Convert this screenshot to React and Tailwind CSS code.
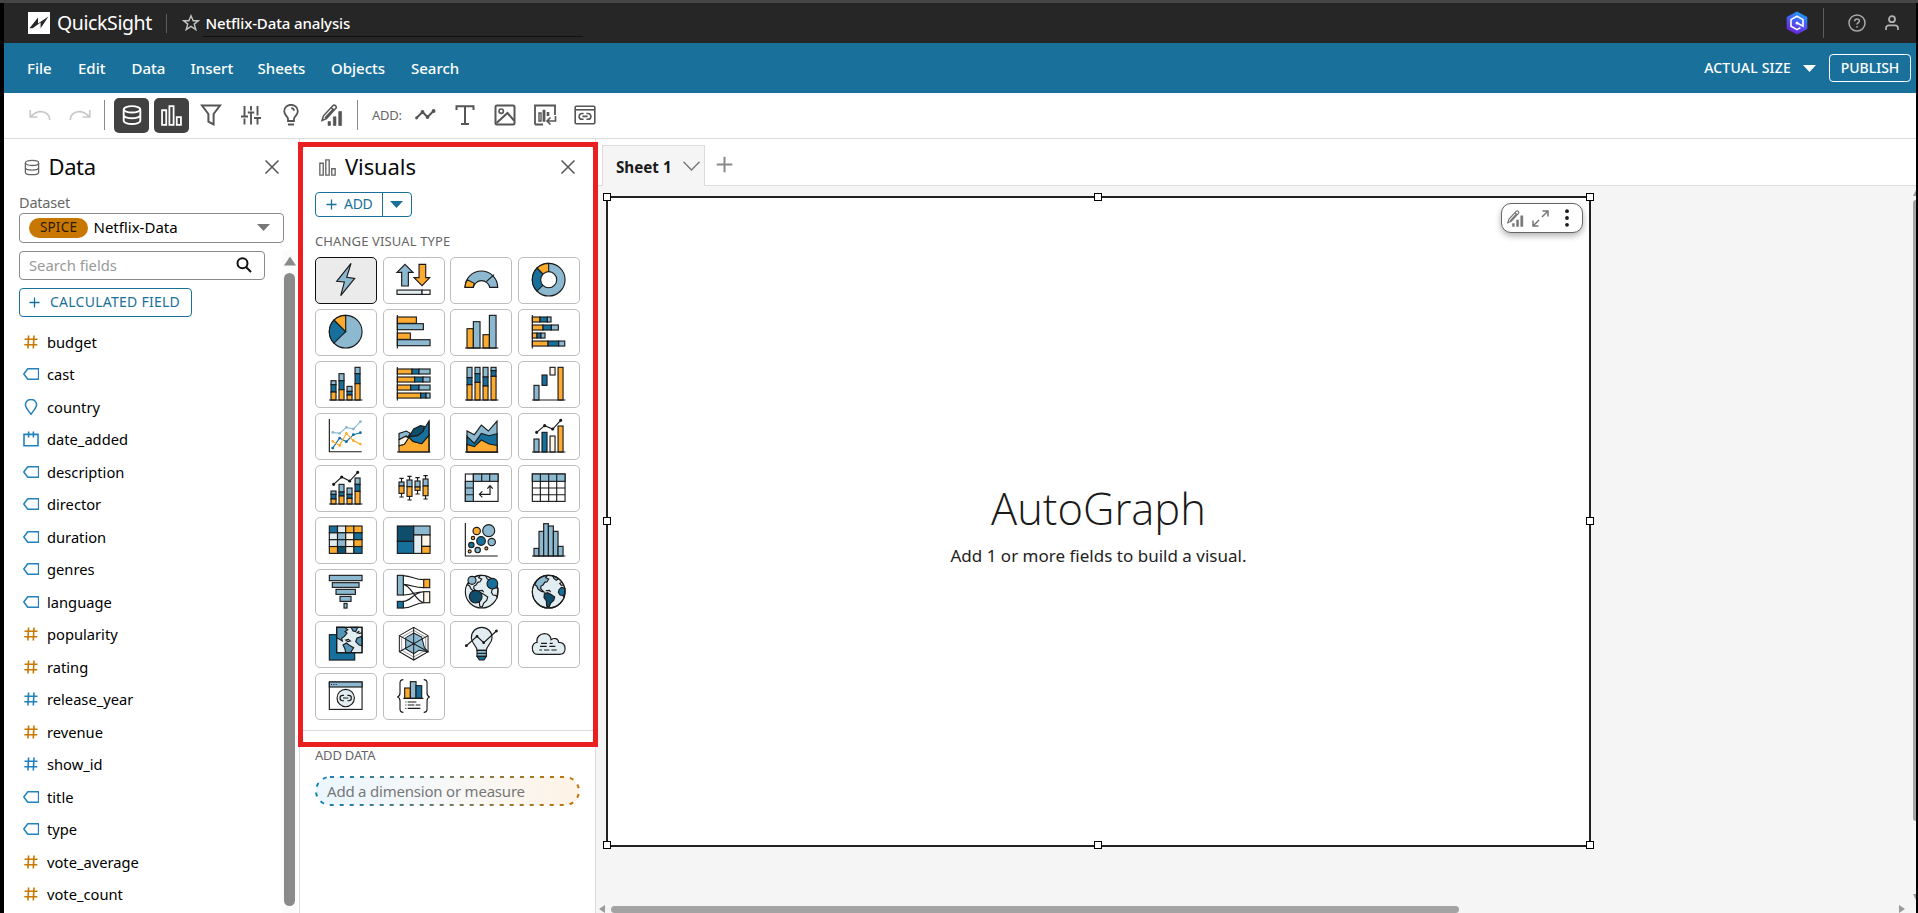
import React from "react";

const L = "#8cb8d0";
const B = "#17709c";
const D = "#0f4d6c";
const O = "#fdab2f";
const P = "#e2edf2";
const C = "#fdf6e6";

const Base = () => <path d="M0 99H100" />;
const R = ({ x, y, w, h, f }) => <rect x={x} y={y} width={w} height={h} fill={f} />;

const VStack = ({ x, stops, w = 15 }) => {
  const fills = [L, B, O];
  return stops.slice(0, 3).map((s, i) => (
    <rect key={i} x={x} y={s} width={w} height={stops[i + 1] - s} fill={fills[i]} />
  ));
};
const HStack = ({ y, stops }) => {
  const fills = [O, B, L];
  return stops.slice(0, 3).map((s, i) => (
    <rect key={i} x={s} y={y} width={stops[i + 1] - s} height={15} fill={fills[i]} />
  ));
};
const Series = ({ pts, color = "#1a1a1a", r = 3 }) => (
  <g stroke={color} fill={color}>
    <polyline points={pts.map((p) => p.join(",")).join(" ")} fill="none" />
    {pts.map(([x, y], i) => (
      <circle key={i} cx={x} cy={y} r={r} />
    ))}
  </g>
);
const Box = ({ x, top, bottom, split, lo, hi }) => (
  <g>
    <path d={`M${x + 7.5} ${lo}V${hi}M${x + 1} ${lo}H${x + 14}M${x + 1} ${hi}H${x + 14}`} />
    <R x={x} y={top} w={15} h={split - top} f={L} />
    <R x={x} y={split} w={15} h={bottom - split} f={O} />
  </g>
);

const heat = [
  [B, P, O, O],
  [P, L, C, B],
  [P, L, C, O],
  [O, D, C, B],
];

const NORTH = "M14 17C24 6 34 1 46 1L41 8L50 12L45 20L38 22L33 30L27 33L26 40L31 46L36 51L28 49L18 42L14 33L8 30Z";
const SOUTH = "M37 56L46 53L56 58L68 66L65 76L56 84L51 97L44 93L43 78L36 68Z";
const AFRICA = "M99 40L88 37L81 44L79 52L84 60L92 61L96 66Z";
const EUROPE = "M62 3L66 11L73 16L78 12M90 22L83 25L88 31L94 30";

const visuals = {
  AutoGraph: <path d="M66 1L23 55L46 57L35 98L77 46L53 43Z" fill={L} />,
  KPI: (
    <g>
      <path d="M24 4L48 28H34V69H14V28H0Z" fill={L} />
      <path d="M66 4H86V44H98L75 68L51 44H66Z" fill={O} />
      <R x={0} y={81} w={75} h={13} f={P} />
      <R x={75} y={81} w={24} h={13} f="#fff" />
    </g>
  ),
  Gauge: (
    <g>
      <path d="M0 73A49 49 0 0 1 98 73H74A25 25 0 0 0 25 73Z" fill={L} />
      <path d="M0 73A49 49 0 0 1 7 50L28 61A25 25 0 0 0 25 73Z" fill={O} />
      <path d="M64 56L87 35" />
    </g>
  ),
  Donut: (
    <g>
      <circle cx="50" cy="50" r="49" fill={L} />
      <path d="M50 50L15 84A49 49 0 0 1 15 15Z" fill={B} />
      <path d="M50 50L15 15A49 49 0 0 1 50 1Z" fill={O} />
      <circle cx="50" cy="50" r="24" fill="#fff" />
    </g>
  ),
  Pie: (
    <g>
      <circle cx="50" cy="50" r="49" fill={L} />
      <path d="M50 50L15 84A49 49 0 0 1 15 15Z" fill={B} />
      <path d="M50 50L15 15A49 49 0 0 1 50 1Z" fill={O} />
    </g>
  ),
  "Horizontal bar": (
    <g>
      <R x={1} y={6} w={57} h={19} f={O} />
      <R x={1} y={26} w={78} h={18} f={L} />
      <R x={1} y={54} w={39} h={19} f={O} />
      <R x={1} y={74} w={98} h={18} f={L} />
      <path d="M1 0V100" />
    </g>
  ),
  "Vertical bar": (
    <g>
      <R x={6} y={41} w={19} h={58} f={O} />
      <R x={25} y={20} w={20} h={79} f={L} />
      <R x={54} y={59} w={19} h={40} f={O} />
      <R x={73} y={1} w={20} h={98} f={L} />
      <Base />
    </g>
  ),
  "Stacked horizontal": (
    <g>
      <HStack y={6} stops={[1, 24, 46, 57]} />
      <HStack y={30} stops={[1, 33, 58, 79]} />
      <HStack y={54} stops={[1, 15, 27, 39]} />
      <HStack y={78} stops={[1, 48, 80, 98]} />
      <path d="M1 0V100" />
    </g>
  ),
  "Stacked vertical": (
    <g>
      <VStack x={6} stops={[41, 53, 75, 99]} />
      <VStack x={30} stops={[20, 41, 68, 99]} />
      <VStack x={54} stops={[58, 73, 84, 99]} />
      <VStack x={78} stops={[1, 20, 50, 99]} />
      <Base />
    </g>
  ),
  "Full horizontal": (
    <g>
      <HStack y={6} stops={[1, 45, 66, 99]} />
      <HStack y={30} stops={[1, 53, 78, 99]} />
      <HStack y={54} stops={[1, 41, 66, 99]} />
      <HStack y={78} stops={[1, 71, 87, 99]} />
      <path d="M1 0V100" />
    </g>
  ),
  "Full vertical": (
    <g>
      <VStack x={6} stops={[1, 32, 53, 99]} />
      <VStack x={30} stops={[1, 20, 46, 99]} />
      <VStack x={54} stops={[1, 30, 57, 99]} />
      <VStack x={78} stops={[1, 11, 28, 99]} />
      <Base />
    </g>
  ),
  Waterfall: (
    <g>
      <R x={6} y={55} w={15} h={44} f={L} />
      <R x={30} y={24} w={15} h={31} f={B} />
      <R x={54} y={1} w={15} h={23} f={C} />
      <R x={78} y={1} w={15} h={98} f={O} />
      <Base />
    </g>
  ),
  Line: (
    <g>
      <Series color={L} r={2.5} pts={[[11, 40], [32, 43], [52, 25], [73, 30], [94, 8]]} />
      <Series color={B} r={2.5} pts={[[11, 87], [32, 57], [52, 68], [73, 47], [94, 41]]} />
      <Series color={O} r={2.5} pts={[[11, 67], [32, 79], [52, 43], [73, 65], [94, 75]]} />
      <path d="M1 0V98H98" />
    </g>
  ),
  Area: (
    <g>
      <path d="M6 99V80L22 76L36 53L48 67L74 74L96 48V99Z" fill={O} />
      <path d="M6 62V43L28 36L40 43L32 55L28 51Z" fill={L} />
      <path d="M6 80V62L26 52L35 56L22 76Z" fill={C} />
      <path d="M35 54L62 49L78 35L96 6V48L74 74L48 67Z" fill={B} />
      <path d="M35 54L50 30L70 20L82 22L78 37L62 50L45 50Z" fill={D} />
      <path d="M96 6V99M0 99H100" />
    </g>
  ),
  "Stacked area": (
    <g>
      <path d="M6 99V36L28 47L49 18L70 36L96 6V99Z" fill={L} />
      <path d="M6 99V52L28 73L49 43L72 50L96 44V99Z" fill={B} />
      <path d="M6 99V76L28 83L49 63L72 75L96 79V99Z" fill={O} />
      <Base />
    </g>
  ),
  "Clustered combo": (
    <g>
      <R x={6} y={60} w={15} h={39} f={L} />
      <R x={30} y={40} w={15} h={59} f={B} />
      <R x={54} y={51} w={15} h={48} f={C} />
      <R x={78} y={21} w={15} h={78} f={O} />
      <Series pts={[[14, 40], [38, 20], [62, 30], [86, 4]]} />
      <Base />
    </g>
  ),
  "Stacked combo": (
    <g>
      <VStack x={6} stops={[60, 70, 84, 99]} />
      <VStack x={30} stops={[40, 63, 75, 99]} />
      <VStack x={54} stops={[51, 70, 82, 99]} />
      <VStack x={78} stops={[21, 40, 61, 99]} />
      <Series pts={[[14, 40], [38, 18], [62, 30], [86, 4]]} />
      <Base />
    </g>
  ),
  "Box plot": (
    <g>
      <Box x={6} top={33} split={45} bottom={67} lo={22} hi={78} />
      <Box x={30} top={27} split={47} bottom={76} lo={16} hi={87} />
      <Box x={54} top={30} split={48} bottom={58} lo={20} hi={69} />
      <Box x={78} top={24} split={45} bottom={74} lo={14} hi={84} />
    </g>
  ),
  Pivot: (
    <g>
      <R x={1} y={9} w={98} h={82} f="#fff" />
      <R x={25} y={9} w={74} h={22} f={L} />
      <R x={1} y={31} w={24} h={60} f={L} />
      <path d="M25 9V31M50 9V31M74 9V31M1 51H25M1 71H25" />
      <path d="M75 46V70H44M67 53L75 44L83 53M52 61L43 70L52 79" />
    </g>
  ),
  Table: (
    <g>
      <R x={1} y={9} w={98} h={82} f="#fff" />
      <R x={1} y={9} w={98} h={22} f={L} />
      <path d="M25 9V91M50 9V91M74 9V91M1 51H99M1 71H99" />
    </g>
  ),
  Heatmap: (
    <g>
      {heat.map((row, r) =>
        row.map((f, c) => <R key={`${r}-${c}`} x={1 + c * 24.5} y={9 + r * 20.5} w={24.5} h={20.5} f={f} />)
      )}
    </g>
  ),
  Treemap: (
    <g>
      <R x={1} y={9} w={49} h={46} f={D} />
      <R x={1} y={55} w={49} h={36} f={B} />
      <R x={50} y={9} w={49} h={27} f={L} />
      <R x={50} y={36} w={24} h={55} f={P} />
      <R x={74} y={36} w={25} h={34} f={C} />
      <R x={74} y={70} w={25} h={21} f={O} />
    </g>
  ),
  Scatter: (
    <g>
      <circle cx="35" cy="24" r="11" fill={O} />
      <circle cx="71" cy="23" r="18" fill={L} />
      <circle cx="24" cy="45" r="5" fill={O} />
      <circle cx="48" cy="54" r="13" fill={B} />
      <circle cx="80" cy="57" r="11" fill={L} />
      <circle cx="19" cy="66" r="8" fill={B} />
      <circle cx="64" cy="76" r="4.5" fill={O} />
      <circle cx="38" cy="81" r="8" fill={L} />
      <circle cx="14" cy="85" r="4.5" fill={O} />
      <path d="M1 0V99H98" />
    </g>
  ),
  Histogram: (
    <g>
      <R x={6} y={76} w={15} h={23} f={L} />
      <R x={21} y={25} w={14} h={74} f={L} />
      <R x={35} y={2} w={14} h={97} f={L} />
      <R x={49} y={9} w={15} h={90} f={L} />
      <R x={64} y={25} w={14} h={74} f={L} />
      <R x={78} y={70} w={15} h={29} f={L} />
      <Base />
    </g>
  ),
  Funnel: (
    <g>
      <R x={1} y={1} w={98} h={16} f={L} />
      <R x={10} y={23} w={80} h={14} f={L} />
      <R x={21} y={43} w={58} h={15} f={L} />
      <R x={33} y={64} w={33} h={15} f={L} />
      <R x={45} y={85} w={9} h={14} f={L} />
    </g>
  ),
  Sankey: (
    <g>
      <path d="M19 2C48 4 52 14 80 14M19 28C44 30 52 38 80 38M19 28C42 30 56 80 80 83M19 60C50 60 52 50 80 50M19 79C44 78 48 52 80 50M19 99C50 98 52 84 80 83" />
      <R x={1} y={1} w={18} h={59} f={L} />
      <R x={1} y={79} w={18} h={20} f={B} />
      <R x={80} y={13} w={18} h={25} f={O} />
      <R x={80} y={50} w={18} h={33} f={C} />
    </g>
  ),
  "Points on map": (
    <g>
      <circle cx="50" cy="50" r="49" fill={P} />
      <path d={NORTH} />
      <path d={SOUTH} />
      <path d={AFRICA} />
      <path d={EUROPE} />
      <path d="M41 47L52 46L56 51" />
      <circle cx="21" cy="16" r="12" fill={L} />
      <circle cx="82" cy="26" r="16" fill={B} />
      <circle cx="32" cy="65" r="19" fill={D} />
    </g>
  ),
  "Filled map": (
    <g>
      <circle cx="50" cy="50" r="49" fill={P} />
      <path d={NORTH} fill={L} />
      <path d="M62 3L66 11L73 16L78 12L74 7Z" fill={L} />
      <path d={SOUTH} fill={D} />
      <path d={AFRICA} fill={B} />
      <path d="M90 22L83 25L88 31L94 30M41 47L52 46L56 51" />
      <circle cx="50" cy="50" r="49" />
    </g>
  ),
  "Layer map": (
    <g>
      <R x={1} y={23} w={76} h={76} f={B} />
      <R x={23} y={1} w={76} h={76} f={P} />
      <path d="M23 1H47L56 8L48 14L54 18L46 28L38 34L40 42L34 38L23 32Z" fill="#5496ba" />
      <path d="M66 1L72 12L80 14L86 1ZM99 28L84 33L80 44L90 54L99 56ZM42 54L52 48L60 54L74 62L64 77H50L48 66Z" fill="#5496ba" />
      <path d="M50 39L58 37L64 42L56 44ZM91 12L84 17L92 19L99 17" />
      <rect x="23" y="1" width="76" height="76" />
    </g>
  ),
  Radar: (
    <g strokeWidth="3">
      <path d="M50 1L93 26V74L50 99L7 74V26Z" fill="#fff" />
      <path d="M50 10L86 31V69L50 90L14 69V31Z" stroke="#6b6b6b" strokeWidth="2" />
      <path d="M50 18L74 30L82 62L93 74L66 70L50 80L26 66V32Z" fill={L} />
      <path d="M50 1V99M7 26L93 74M93 26L7 74" />
    </g>
  ),
  Insight: (
    <g>
      <path d="M36 70C36 56 19 50 19 32C19 14 33 1 50 1S81 14 81 32C81 50 64 56 64 70Z" fill={P} />
      <path d="M36 70H64V88H36Z" fill={L} />
      <path d="M36 79H64" />
      <path d="M36 88H64L57 99H43Z" fill={B} />
      <Series pts={[[4, 56], [36, 28], [56, 47], [94, 12]]} r={2.5} />
    </g>
  ),
  "Word cloud": (
    <g>
      <path d="M17 82C6 82 1 74 1 64C1 53 8 46 15 46C12 30 25 20 37 20C50 20 56 28 57 38C66 32 78 33 80 46C92 46 99 54 99 65C99 76 92 82 82 82Z" fill={P} />
      <path d="M27 49H45M53 49H62M24 58H44M52 58H70M22 69H30M36 69H52M58 69H74" strokeWidth="3.5" />
    </g>
  ),
  "Custom content": (
    <g>
      <R x={1} y={9} w={98} h={82} f="#fff" />
      <R x={1} y={9} w={98} h={15} f={L} />
      <path d="M6 16.5H9M13 16.5H16M20 16.5H23" />
      <circle cx="50" cy="57" r="26" fill={P} />
      <path d="M45 49H41A8 8 0 0 0 41 65H45M55 49H59A8 8 0 0 1 59 65H55M42 57H58" />
    </g>
  ),
  "Custom visual": (
    <g>
      <R x={23} y={27} w={17} h={31} f={O} />
      <R x={40} y={8} w={17} h={50} f={L} />
      <R x={57} y={20} w={17} h={38} f={B} />
      <path d="M19 58H79M25 69H28M32 69H58M25 78H28M32 78H52M56 78H70M25 88H28M32 88H70" />
      <path d="M19 2C11 2 9 5 9 12V42C9 50 6 53 1 54C6 55 9 58 9 66V90C9 97 11 100 19 100M80 2C88 2 90 5 90 12V42C90 50 93 53 98 54C93 55 90 58 90 66V90C90 97 88 100 80 100" />
    </g>
  ),
};

const VisualTile = ({ name, active }) => (
  <button
    aria-label={name}
    className={
      active
        ? "flex h-[47px] items-center justify-center rounded-[5px] border border-[#111] bg-[#ebebeb] pb-[2px]"
        : "flex h-[47px] items-center justify-center rounded-[5px] border border-[#bdbdbd] bg-white pb-[2px]"
    }
  >
    <svg viewBox="0 0 100 100" className="size-[33.4px] overflow-visible" fill="none" stroke="#1a1a1a" strokeWidth="3.4">
      {visuals[name]}
    </svg>
  </button>
);

const fieldIcons = {
  num: <path d="M5.6 1.5L4.9 14.5M11 1.5L10.3 14.5M1.5 5.3H14.5M1.3 10.8H14.3" strokeWidth="1.6" />,
  text: <path d="M0.8 8L4.8 2.7H15.6V13.3H4.8Z" strokeWidth="1.5" strokeLinejoin="round" />,
  geo: <path d="M8 15.4C5 11 2.4 8.6 2.4 5.8A5.6 5.4 0 0 1 13.6 5.8C13.6 8.6 11 11 8 15.4Z" strokeWidth="1.5" />,
  date: <path d="M1 3.4H15V14.8H1ZM5.6 0.4V6.4M10.4 0.4V6.4" strokeWidth="1.6" />,
};

const fields = [
  ["budget", "num", true],
  ["cast", "text"],
  ["country", "geo"],
  ["date_added", "date"],
  ["description", "text"],
  ["director", "text"],
  ["duration", "text"],
  ["genres", "text"],
  ["language", "text"],
  ["popularity", "num", true],
  ["rating", "num", true],
  ["release_year", "num"],
  ["revenue", "num", true],
  ["show_id", "num"],
  ["title", "text"],
  ["type", "text"],
  ["vote_average", "num", true],
  ["vote_count", "num", true],
];

const menu = [
  ["File", "w-[51px]"],
  ["Edit", "w-[53.5px]"],
  ["Data", "w-[59px]"],
  ["Insert", "w-[67px]"],
  ["Sheets", "w-[73.5px]"],
  ["Objects", "w-[80px]"],
  ["Search", "w-[60px]"],
];

const Close = () => (
  <svg viewBox="0 0 14 14" className="size-[14px]" fill="none" stroke="#545454" strokeWidth="1.5">
    <path d="M0.5 0.5L13.5 13.5M13.5 0.5L0.5 13.5" />
  </svg>
);
const Plus = ({ className }) => (
  <svg viewBox="0 0 12 12" className={className} fill="none" stroke="currentColor" strokeWidth="1.4">
    <path d="M6 0.5V11.5M0.5 6H11.5" />
  </svg>
);
const Caret = ({ className }) => (
  <svg viewBox="0 0 12 7" className={className} fill="currentColor" preserveAspectRatio="none">
    <path d="M0 0H12L6 7Z" />
  </svg>
);
const Database = ({ className, sw }) => (
  <svg viewBox="0 0 20 20" className={className} fill="none" stroke="currentColor" strokeWidth={sw}>
    <ellipse cx="10" cy="4.3" rx="8.3" ry="3.2" />
    <path d="M1.7 4.3V15.8C1.7 17.6 5.4 19 10 19S18.3 17.6 18.3 15.8V4.3M1.7 10C1.7 11.8 5.4 13.2 10 13.2S18.3 11.8 18.3 10" />
  </svg>
);
const Bars = ({ className, sw }) => (
  <svg viewBox="0 0 20 20" className={className} fill="none" stroke="currentColor" strokeWidth={sw}>
    <path d="M1 5H5V19H1ZM8 1H12V19H8ZM15 11.5H19V19H15Z" />
  </svg>
);
const PencilChart = ({ className }) => (
  <svg viewBox="0 0 22 22" className={className} fill="none" stroke="currentColor" strokeWidth="1.5">
    <path d="M1 16.5L2.5 11.8L11.8 1.8C12.6 1 13.8 1 14.6 1.8C15.4 2.6 15.4 3.8 14.6 4.6L5.5 14.6ZM4 14L12.6 4.8M10.2 3.6L13 6.2" />
    <path d="M7 17.5H9.5V21.5H7ZM12.3 12.8H15V21.5H12.3ZM17.7 7.5H20.6V21.5H17.7Z" fill="currentColor" strokeWidth="0.6" />
  </svg>
);

const Tool = ({ className, children }) => (
  <svg viewBox="0 0 22 22" className={className} fill="none" stroke="#555" strokeWidth="2">
    {children}
  </svg>
);

const Header = () => (
  <header className="flex h-[40px] shrink-0 items-center bg-[#262626] text-white">
    <svg viewBox="0 0 22 22" className="ml-[24px] size-[22px]">
      <rect width="22" height="22" fill="#fff" />
      <path d="M1.5 16.3L10 5.6V11.6L20.5 4.6L12.6 16.3V10.4L4.6 16.3Z" fill="#262626" />
    </svg>
    <span className="ml-[7px] w-[109px] text-[19.5px] leading-none tracking-[-0.4px]">QuickSight</span>
    <span className="h-[19px] w-px bg-[#5d5d5d]" />
    <svg viewBox="0 0 24 24" className="ml-[15px] size-[18px]" fill="none" stroke="#c4c4c4" strokeWidth="1.9">
      <path d="M12 2.4L14.9 9H21.8L16.3 13.5L18.4 20.8L12 16.6L5.6 20.8L7.7 13.5L2.2 9H9.1Z" />
    </svg>
    <div className="mb-[6px] ml-[3px] flex h-[26px] w-[380px] items-center self-end border-b border-[#111]">
      <span className="ml-[2.5px] text-[15px] font-medium leading-none tracking-[-0.13px]">Netflix-Data analysis</span>
    </div>
    <svg viewBox="0 0 22 24" className="ml-auto h-[24px] w-[22px]">
      <defs>
        <linearGradient id="hexfill" x1="0.7" y1="0" x2="0.3" y2="1">
          <stop offset="0" stopColor="#14a2ff" />
          <stop offset="0.45" stopColor="#4a5cf5" />
          <stop offset="1" stopColor="#6b1fd0" />
        </linearGradient>
      </defs>
      <path d="M11 0.5L21.3 6V18L11 23.5L0.7 18V6Z" fill="url(#hexfill)" />
      <path d="M14.4 16.6L11 18.6L5 15.2V8.6L11 5.2L17 8.6V15.2L11.2 12" fill="none" stroke="#fff" strokeWidth="1.6" />
      <circle cx="11" cy="12" r="1.5" fill="#fff" />
    </svg>
    <span className="ml-[15px] h-[30px] w-px bg-[#5d5d5d]" />
    <svg viewBox="0 0 18 18" className="ml-[24px] size-[18px]" fill="none" stroke="#a8a8a8" strokeWidth="1.5">
      <circle cx="9" cy="9" r="8" />
      <path d="M6.6 7.2C6.6 5.7 7.6 4.9 9 4.9S11.4 5.7 11.4 7C11.4 8.6 9 8.7 9 10.6M9 12V13.5" />
    </svg>
    <svg viewBox="0 0 16 16" className="ml-[18px] mr-[16px] size-[16px]" fill="none" stroke="#b0b0b0" strokeWidth="1.8">
      <circle cx="8" cy="4.2" r="3" />
      <path d="M2 15V13.2A2.9 2.9 0 0 1 4.9 10.3H11.1A2.9 2.9 0 0 1 14 13.2V15" />
    </svg>
  </header>
);

const MenuBar = () => (
  <nav className="flex h-[50px] shrink-0 items-center bg-[#19719b] font-medium text-white">
    <div className="ml-[23px] flex text-[15px] leading-none">
      {menu.map(([label, w]) => (
        <span key={label} className={w}>
          {label}
        </span>
      ))}
    </div>
    <span className="ml-auto text-[14px] leading-none tracking-[0.2px]">ACTUAL SIZE</span>
    <Caret className="ml-[12px] h-[7px] w-[13px]" />
    <button className="ml-[13px] mr-[5px] flex h-[28px] w-[82px] items-center justify-center rounded-[4px] border border-white text-[14px] leading-none">
      PUBLISH
    </button>
  </nav>
);

const Toolbar = () => (
  <div className="flex h-[46px] shrink-0 items-center border-b border-[#dcdcdc] bg-white pb-px">
    <svg viewBox="0 0 22 12" className="ml-[25px] h-[12px] w-[22px]" fill="none" stroke="#c8c8c8" strokeWidth="1.7">
      <path d="M1.2 1V8H8.5M1.5 8C5 4 8.5 2.6 12 2.6C17 2.6 20.6 6 20.8 11" />
    </svg>
    <svg viewBox="0 0 22 12" className="ml-[18px] h-[12px] w-[22px]" fill="none" stroke="#c8c8c8" strokeWidth="1.7">
      <path d="M20.8 1V8H13.5M20.5 8C17 4 13.5 2.6 10 2.6C5 2.6 1.4 6 1.2 11" />
    </svg>
    <span className="ml-[13px] h-[30px] w-px bg-[#8a8a8a]" />
    <span className="ml-[9px] flex size-[35px] items-center justify-center rounded-[5px] bg-[#414141] text-white">
      <Database className="h-[22px] w-[20px]" sw="1.9" />
    </span>
    <span className="ml-[5px] flex size-[35px] items-center justify-center rounded-[5px] bg-[#414141] text-white">
      <Bars className="size-[21px]" sw="1.7" />
    </span>
    <Tool className="ml-[11px] size-[22px]">
      <path d="M2 1.5H20L13.6 10V20.4L8.4 17.6V10Z" />
    </Tool>
    <Tool className="ml-[18px] size-[22px]">
      <path d="M4.5 2V11.5M4.5 14.5V20.5M1 12.5H8M11 2V6.5M7.8 8.5H14.2M11 9V20.5M17.5 2V11.5M14 14H21M17.5 14.5V20.5" strokeWidth="1.9" />
    </Tool>
    <Tool className="ml-[18px] size-[22px]">
      <path d="M8 17V14.8C8 12.6 4.2 11 4.2 7.2A6.8 6.4 0 0 1 17.8 7.2C17.8 11 14 12.6 14 14.8V17ZM8 20.5H14M11.2 4.2C12.8 4.2 14 5.2 14 6.8" strokeWidth="1.8" />
    </Tool>
    <PencilChart className="ml-[19px] size-[22px] text-[#555]" />
    <span className="ml-[14px] h-[30px] w-px bg-[#8a8a8a]" />
    <span className="ml-[14px] w-[42px] text-[13px] leading-none tracking-[-0.3px] text-[#666]">ADD:</span>
    <Tool className="size-[22px]">
      <path d="M2 14.5L8.5 8L13.5 13L20 6.5" />
      <circle cx="2.6" cy="14" r="1.4" fill="#555" stroke="none" />
      <circle cx="8.5" cy="8" r="1.9" fill="#555" stroke="none" />
      <circle cx="13.5" cy="13" r="1.9" fill="#555" stroke="none" />
      <circle cx="19.6" cy="7" r="1.9" fill="#555" stroke="none" />
    </Tool>
    <Tool className="ml-[18px] size-[22px]">
      <path d="M2.5 6V2.2H19.5V6M11 2.2V20M7 20H15" />
    </Tool>
    <Tool className="ml-[18px] size-[22px]">
      <rect x="1.5" y="1.5" width="19" height="19" rx="1.5" />
      <circle cx="7.2" cy="7.2" r="2.2" strokeWidth="1.6" />
      <path d="M2.5 19L13.5 9L20 16.5" />
    </Tool>
    <Tool className="ml-[17px] h-[22px] w-[24px]">
      <path d="M1 20.5V1.5H21V11M1 20.5H9" strokeWidth="1.8" />
      <path d="M5 9H7V17H5ZM9.3 6.5H10.7V17H9.3Z" strokeWidth="1.4" />
      <path d="M14 8V12" strokeWidth="2.6" />
      <path d="M21.5 12V17H13.5M16.5 13.5L13 17L16.5 20.5" strokeWidth="1.6" />
    </Tool>
    <Tool className="ml-[17px] size-[22px]">
      <rect x="1.2" y="2.2" width="19.6" height="17.6" rx="1" strokeWidth="1.6" />
      <path d="M1 5.8H21" strokeWidth="1.6" />
      <path d="M9.6 9.5H8A2.9 2.9 0 0 0 8 15.3H9.6M12.4 9.5H14A2.9 2.9 0 0 1 14 15.3H12.4M8.4 12.4H13.6" strokeWidth="1.6" />
    </Tool>
  </div>
);

const DataPanel = () => (
  <aside className="flex w-[296px] shrink-0 flex-col border-r border-[#dcdcdc] bg-white">
    <div className="mt-[14px] flex h-[28px] items-center pl-[20px] pr-[20px]">
      <Database className="h-[17px] w-[16px] text-[#666]" sw="1.6" />
      <h2 className="-mt-[3px] ml-[8.5px] text-[22px] leading-none tracking-[-0.4px] text-[#0a0a0a]">Data</h2>
      <span className="ml-auto">
        <Close />
      </span>
    </div>
    <span className="ml-[15px] mt-[11px] h-[20px] text-[14.5px] leading-[20px] tracking-[-0.2px] text-[#666]">Dataset</span>
    <div className="ml-[15px] mt-px flex h-[30px] w-[265px] items-center rounded-[4px] border border-[#8a8a8a] pb-px pl-[9px] pr-[13px]">
      <span className="flex h-[20px] w-[59px] items-center justify-center rounded-full bg-[#c87800] text-[13.5px] leading-none tracking-[0.2px] text-[#2b1a00]">
        SPICE
      </span>
      <span className="ml-[5.5px] text-[15px] leading-none text-black">Netflix-Data</span>
      <Caret className="ml-auto h-[7px] w-[13px] text-[#777]" />
    </div>
    <div className="flex min-h-0 flex-1">
      <div className="flex flex-1 flex-col pl-[15px]">
        <div className="mt-[8px] flex h-[29px] w-[246px] items-center justify-between rounded-[4px] border border-[#8a8a8a] pb-px pl-[9px] pr-[12px]">
          <span className="text-[14.8px] leading-none text-[#999]">Search fields</span>
          <svg viewBox="0 0 16 16" className="size-[16px]" fill="none" stroke="#111" strokeWidth="2">
            <circle cx="6.5" cy="6.2" r="5" />
            <path d="M10 10L15 15" />
          </svg>
        </div>
        <button className="mt-[8px] flex h-[29px] w-[173px] items-center rounded-[4px] border border-[#19719b] pb-px pl-[9px] text-[#19719b]">
          <Plus className="size-[11px]" />
          <span className="ml-[10px] text-[14px] leading-none tracking-[0.25px]">CALCULATED FIELD</span>
        </button>
        <ul className="mt-[8.25px]">
          {fields.map(([name, kind, measure]) => (
            <li key={name} className="flex h-[32.5px] items-center pl-[4px]">
              <svg
                viewBox="0 0 16 16"
                className={measure ? "size-[16px] text-[#c87800]" : "size-[16px] text-[#2282bd]"}
                fill="none"
                stroke="currentColor"
              >
                {fieldIcons[kind]}
              </svg>
              <span className="ml-[8px] text-[14.7px] leading-[20px] text-black">{name}</span>
            </li>
          ))}
        </ul>
      </div>
      <div className="mr-[2px] mt-[7px] flex w-[15px] flex-col items-center bg-[#fbfbfb] pt-[6px]">
        <svg viewBox="0 0 12 10" className="h-[10px] w-[12px]" fill="#8a8a8a">
          <path d="M6 0.5L12 9.5H0Z" />
        </svg>
        <span className="mt-[7px] h-[633px] w-[11px] rounded-full bg-[#8a8a8a]" />
      </div>
    </div>
  </aside>
);

const VisualsPanel = () => (
  <aside className="flex w-[296px] shrink-0 flex-col border-r border-[#dcdcdc] bg-white">
    <div className="mt-[14px] flex h-[28px] items-center pl-[19px] pr-[20px]">
      <Bars className="h-[17px] w-[17px] text-[#666]" sw="1.6" />
      <h2 className="-mt-[3px] ml-[9px] text-[22px] leading-none tracking-[-0.1px] text-[#0a0a0a]">Visuals</h2>
      <span className="ml-auto">
        <Close />
      </span>
    </div>
    <div className="ml-[15px] mt-[11px] flex h-[25px] w-[97px] rounded-[4px] border border-[#19719b] pb-px text-[#19719b]">
      <span className="-mb-px flex w-[67px] items-center border-r border-[#19719b] pb-px pl-[10px] text-[14px] leading-none tracking-[-0.3px]">
        <Plus className="mr-[7px] size-[11px]" />
        ADD
      </span>
      <span className="flex flex-1 items-center justify-center pr-px">
        <Caret className="h-[7px] w-[13px]" />
      </span>
    </div>
    <h3 className="ml-[15px] mt-[14px] h-[20px] text-[13px] leading-[20px] tracking-[0.13px] text-[#666]">CHANGE VISUAL TYPE</h3>
    <div className="mx-[15px] mt-[6px] grid grid-cols-4 gap-x-[5.5px] gap-y-[5px]">
      {Object.keys(visuals).map((name, i) => (
        <VisualTile key={name} name={name} active={i === 0} />
      ))}
    </div>
    <div className="mt-[10px] h-px bg-[#dcdcdc]" />
    <h3 className="ml-[15px] mt-[14px] h-[20px] text-[13px] leading-[20px] tracking-[-0.2px] text-[#666]">ADD DATA</h3>
    <div className="mt-[11px] grid pl-[15px]">
      <svg viewBox="0 0 265 30" className="col-start-1 row-start-1 h-[30px] w-[265px]">
        <defs>
          <linearGradient id="wellstroke">
            <stop offset="0" stopColor="#1481bd" />
            <stop offset="1" stopColor="#c87400" />
          </linearGradient>
          <linearGradient id="wellfill">
            <stop offset="0" stopColor="#eaf6fe" />
            <stop offset="0.5" stopColor="#f7f8f8" />
            <stop offset="1" stopColor="#fff3e6" />
          </linearGradient>
        </defs>
        <rect x="1" y="1" width="263" height="28" rx="14" fill="url(#wellfill)" stroke="url(#wellstroke)" strokeWidth="2" strokeDasharray="4 6" />
      </svg>
      <span className="col-start-1 row-start-1 self-center pb-px pl-[12px] text-[15px] leading-[20px] tracking-[-0.21px] text-[#777]">
        Add a dimension or measure
      </span>
    </div>
  </aside>
);

const handleSpots = [
  "-left-[5px] -top-[5px]",
  "left-[486px] -top-[5px]",
  "-right-[5px] -top-[5px]",
  "-left-[5px] top-[319px]",
  "-right-[5px] top-[319px]",
  "-left-[5px] -bottom-[4px]",
  "left-[486px] -bottom-[4px]",
  "-right-[5px] -bottom-[4px]",
];

const Handle = ({ spot }) => (
  <span className={`absolute size-[8px] border-[1.5px] border-black bg-white ${spot}`} />
);

const Canvas = () => (
  <main className="flex min-w-0 flex-1 flex-col bg-[#f5f5f5]">
    <div className="flex h-[47px] shrink-0 items-end bg-white">
      <span className="h-full w-[6px] border-b border-[#dcdcdc]" />
      <div className="flex h-[41px] w-[103px] items-center border-x border-t border-[#dcdcdc] bg-[#f5f5f5] pl-[13px] pt-[3px]">
        <span className="text-[15.2px] font-bold leading-none text-[#1a1a1a]">Sheet 1</span>
        <svg viewBox="0 0 17 10" className="-mt-[3px] ml-[11px] h-[10px] w-[17px]" fill="none" stroke="#777" strokeWidth="1.4">
          <path d="M0.5 0.8L8.5 9L16.5 0.8" />
        </svg>
      </div>
      <div className="flex h-full flex-1 items-center border-b border-[#dcdcdc] pl-[11px] pt-[5px] text-[#888]">
        <Plus className="size-[17px]" />
      </div>
    </div>
    <div className="flex min-h-0 flex-1">
      <div className="flex min-w-0 flex-1 flex-col">
        <div className="relative ml-[10px] mt-[10px] flex h-[651px] w-[985px] flex-col items-center border-2 border-[#222] bg-white">
          <div className="mr-[6px] mt-[5px] flex h-[30px] w-[82px] items-center self-end rounded-[10px] border border-[#666] bg-white pl-[5px] shadow-[0_3px_6px_rgba(0,0,0,0.3)]">
            <PencilChart className="size-[17px] text-[#777]" />
            <svg viewBox="0 0 17 17" className="ml-[8px] size-[17px]" fill="none" stroke="#777" strokeWidth="1.5">
              <path d="M10 7L16 1M10.5 1H16V6.5M7 10L1 16M1 10.5V16H6.5" />
            </svg>
            <svg viewBox="0 0 4 18" className="ml-[16px] h-[18px] w-[4px]" fill="#1a1a1a">
              <circle cx="2" cy="2.2" r="1.9" />
              <circle cx="2" cy="9" r="1.9" />
              <circle cx="2" cy="15.8" r="1.9" />
            </svg>
          </div>
          <h1 className="mt-[251px] font-['Open_Sans','Noto_Sans',sans-serif] text-[43.5px] font-light leading-[50px] text-[#1a1a1a]">
            AutoGraph
          </h1>
          <p className="mt-[10px] text-[17px] leading-[24px] tracking-[0.01px] text-[#222]">Add 1 or more fields to build a visual.</p>
          {handleSpots.map((spot) => (
            <Handle key={spot} spot={spot} />
          ))}
        </div>
        <div className="mt-auto flex h-[8px] items-start pl-[3px] pr-[8px]">
          <svg viewBox="0 0 6 8" className="h-[8px] w-[6px]" fill="#9a9a9a">
            <path d="M6 0V8L0 4Z" />
          </svg>
          <span className="ml-[6px] mt-px h-[7px] w-[848px] rounded-full bg-[#a3a3a3]" />
          <svg viewBox="0 0 6 8" className="ml-auto h-[8px] w-[6px]" fill="#9a9a9a">
            <path d="M0 0V8L6 4Z" />
          </svg>
        </div>
      </div>
      <div className="flex w-[3px] flex-col overflow-hidden">
        <svg viewBox="0 0 3 6" className="mt-[4px] h-[6px] w-[3px]" fill="#9a9a9a">
          <path d="M3 0V6H0Z" />
        </svg>
        <span className="mt-[4px] h-[621px] w-[3px] rounded-l-[3px] bg-[#a3a3a3]" />
        <svg viewBox="0 0 3 6" className="mt-[73px] h-[6px] w-[3px]" fill="#9a9a9a">
          <path d="M3 6V0H0Z" />
        </svg>
      </div>
    </div>
  </main>
);

export default function App() {
  return (
    <div className="relative flex h-[913px] w-[1918px] flex-col overflow-hidden bg-black font-['Noto_Sans',sans-serif]">
      <div className="h-[3px] shrink-0 bg-[#454545]" />
      <div className="ml-[4px] mr-[2px] flex min-h-0 flex-1 flex-col">
        <Header />
        <MenuBar />
        <Toolbar />
        <div className="flex min-h-0 flex-1">
          <DataPanel />
          <VisualsPanel />
          <Canvas />
        </div>
      </div>
      <div className="pointer-events-none absolute left-[298px] top-[142px] h-[605px] w-[300px] border-[5px] border-[#ea1f1f]" />
    </div>
  );
}
